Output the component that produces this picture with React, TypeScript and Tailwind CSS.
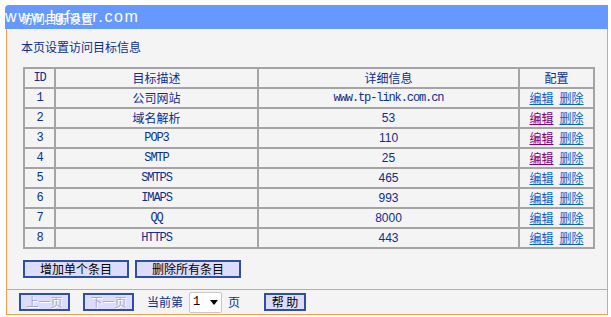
import React from 'react';

const rows = [
  { id: '1', name: '公司网站', detail: 'www.tp-link.com.cn', mono: true, visited: false },
  { id: '2', name: '域名解析', detail: '53', mono: false, visited: true },
  { id: '3', name: 'POP3', detail: '110', mono: false, visited: true },
  { id: '4', name: 'SMTP', detail: '25', mono: false, visited: true },
  { id: '5', name: 'SMTPS', detail: '465', mono: false, visited: false },
  { id: '6', name: 'IMAPS', detail: '993', mono: false, visited: false },
  { id: '7', name: 'QQ', detail: '8000', mono: false, visited: false },
  { id: '8', name: 'HTTPS', detail: '443', mono: false, visited: false },
];

const cjk = "font-['Noto_Sans_CJK_SC',sans-serif]";
const mono = "font-['Liberation_Mono','Noto_Sans_CJK_SC',monospace] text-[12px] tracking-[-1.1px]";
const cell = 'border-2 border-[#a4a4a4] h-[20px] p-0 text-center align-middle leading-[16px]';
const btn =
  'h-[18px] bg-[#dcdcfc] border-2 border-[#2f4fa6] text-[12px] leading-[14px] flex items-center justify-center';
const off = 'text-[#a9abc4] [text-shadow:1px_1px_0_#ffffff]';

function isLatin(s: string) {
  return /^[A-Za-z0-9.\-]+$/.test(s);
}

export default function App() {
  return (
    <div className={`relative w-[611px] h-[317px] bg-white ${cjk} text-[12px]`}>
      {/* 水印 */}
      <div className="absolute left-[5px] top-[5px] text-white text-[16px] tracking-[1.6px] font-['Liberation_Sans',sans-serif] z-10 pointer-events-none">
        www.lgfaer.com
      </div>

      <div className="pt-[5px] ml-[6px] w-[602px]">
        {/* 标题栏 */}
        <div className="h-[24px] bg-[#6699ff] rounded-tl-[4px] -ml-[1px] flex items-center pl-[16px]">
          <span className="text-white text-[12px] leading-[14px] mt-[3px]">访问目标设置</span>
        </div>

        {/* 主体 */}
        <div className="bg-[#f4f4f4] border-x border-[#f5a04c] pt-[11px] pb-[11px]">
          <div className="pl-[14px] text-[#0b2f8f] text-[12px] leading-[14px]">本页设置访问目标信息</div>

          <table className="mt-[13px] ml-[16px] w-[570px] table-fixed border-collapse text-[#0b2f8f]">
            <colgroup>
              <col className="w-[31px]" />
              <col className="w-[203px]" />
              <col className="w-[261px]" />
              <col className="w-[75px]" />
            </colgroup>
            <thead>
              <tr>
                <td className={`${cell} ${mono}`}>ID</td>
                <td className={cell}>目标描述</td>
                <td className={cell}>详细信息</td>
                <td className={cell}>配置</td>
              </tr>
            </thead>
            <tbody>
              {rows.map((r) => (
                <tr key={r.id}>
                  <td className={`${cell} ${mono}`}>{r.id}</td>
                  <td className={`${cell} ${isLatin(r.name) ? mono : ''}`}>{r.name}</td>
                  <td
                    className={`${cell} ${
                      r.mono ? mono : "font-['Liberation_Sans',sans-serif] text-[12px]"
                    }`}
                  >
                    {r.detail}
                  </td>
                  <td className={cell}>
                    <div className="flex justify-center gap-[6px]">
                      <a className={`underline ${r.visited ? 'text-[#800080]' : 'text-[#0a62cc]'}`}>编辑</a>
                      <a className="underline text-[#0a62cc]">删除</a>
                    </div>
                  </td>
                </tr>
              ))}
            </tbody>
          </table>

          <div className="mt-[11px] ml-[16px] flex gap-[6px]">
            <button className={`${btn} w-[106px] text-black`}>增加单个条目</button>
            <button className={`${btn} w-[106px] text-black`}>删除所有条目</button>
          </div>
        </div>

        {/* 底部 */}
        <div className="h-[26px] bg-[#f4f4f4] border border-[#f5a04c] flex items-center pl-[12px] text-[#0b2f8f]">
          <button className={`${btn} ${off} w-[51px]`}>上一页</button>
          <button className={`${btn} ${off} w-[51px] ml-[13px]`}>下一页</button>
          <span className="ml-[13px] leading-[14px]">当前第</span>
          <div className="ml-[6px] w-[33px] h-[21px] bg-white border border-[#c8c8c8] rounded-[2px] flex items-center justify-between px-[3px]">
            <span className={`text-black ${mono}`}>1</span>
            <svg width="8" height="5" viewBox="0 0 8 5">
              <path d="M0 0H8L4 5Z" fill="#000" />
            </svg>
          </div>
          <span className="ml-[6px] leading-[14px]">页</span>
          <button className={`${btn} w-[42px] ml-[24px] text-black`}>帮&nbsp;助</button>
        </div>
      </div>
    </div>
  );
}
